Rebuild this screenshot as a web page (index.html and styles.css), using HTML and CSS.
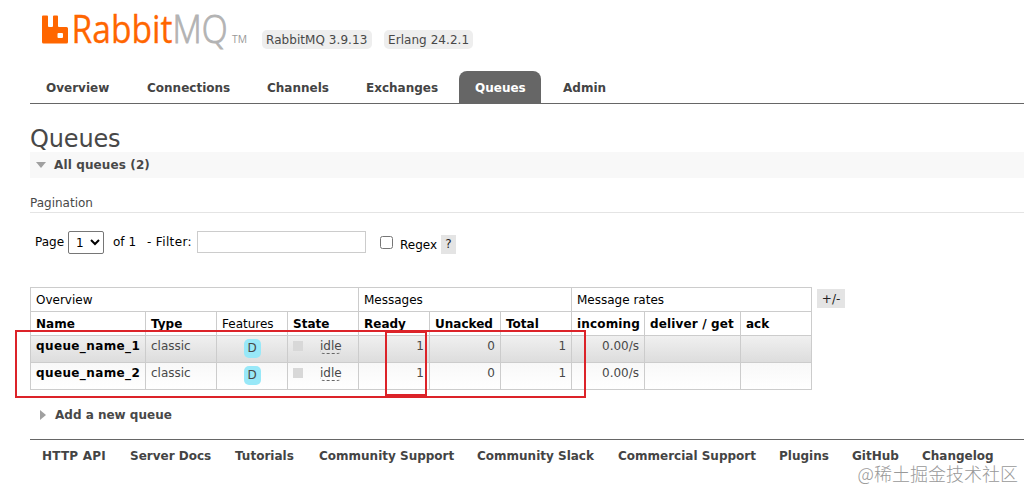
FILE: index.html
```html
<!DOCTYPE html>
<html lang="en">
<head>
  <meta charset="UTF-8" />
  <title>RabbitMQ Management</title>
  <link rel="stylesheet" href="styles.css">
</head>
<body>
  <header class="header">
    <svg class="logo" width="206" height="46" viewBox="0 0 206 46">
      <path class="logo-mark" fill-rule="evenodd" d="M2 6.500h4q1 0 1 1V17q0 1 1 1h3q1 0 1-1V7.500q0-1 1-1h3q1 0 1 1V17q0 1 1 1h7.500q1.500 0 1.500 1.500V33q0 1.500-1.500 1.500H2.500q-1.500 0-1.500-1.500V7.500q0-1 1-1zM17.500 24q-1 0-1 1v3q0 1 1 1h3.500q1 0 1-1v-3q0-1-1-1z" />
      <text class="logo-rabbit" x="30.500" y="34" textLength="101" lengthAdjust="spacingAndGlyphs">Rabbit</text>
      <text class="logo-mq" x="131.500" y="34" textLength="55" lengthAdjust="spacingAndGlyphs">MQ</text>
      <text class="logo-tm" x="191" y="34" textLength="15" lengthAdjust="spacingAndGlyphs">TM</text>
    </svg>
    <div class="versions">
      <span>RabbitMQ 3.9.13</span>
      <span>Erlang 24.2.1</span>
    </div>
  </header>

  <nav class="menu">
    <a class="w-overview">Overview</a>
    <a class="w-connections">Connections</a>
    <a class="w-channels">Channels</a>
    <a class="w-exchanges">Exchanges</a>
    <a class="w-queues selected">Queues</a>
    <a class="w-admin">Admin</a>
  </nav>

  <main class="main">
    <h1>Queues</h1>
    <h2 class="section open">All queues (2)</h2>
    <h3>Pagination</h3>

    <div class="filter">
      <label for="page">Page</label>
      <select id="page"><option>1</option></select>
      <span class="of">of 1</span>
      <label class="filter-label" for="filter">- Filter:</label>
      <input type="text" id="filter" />
      <input type="checkbox" id="regex" />
      <label class="regex-label" for="regex">Regex</label>
      <span class="help">?</span>
    </div>

    <div class="list-wrap">
      <div class="list">
        <table>
          <colgroup>
            <col class="c-name"><col class="c"><col class="c"><col class="c"><col class="c"><col class="c"><col class="c">
            <col class="c-in"><col class="c-get"><col class="c">
          </colgroup>
          <thead>
            <tr>
              <th class="plain" colspan="4">Overview</th>
              <th class="plain" colspan="3">Messages</th>
              <th class="plain" colspan="3">Message rates</th>
            </tr>
            <tr>
              <th>Name</th><th>Type</th><th class="plain">Features</th><th>State</th>
              <th>Ready</th><th>Unacked</th><th>Total</th>
              <th class="wide">incoming</th><th class="wide">deliver / get</th><th>ack</th>
            </tr>
          </thead>
          <tbody>
            <tr class="alt1">
              <td class="name">queue_name_1</td><td>classic</td>
              <td class="center"><span class="feature">D</span></td>
              <td><div class="state"><i></i><abbr>idle</abbr></div></td>
              <td class="r">1</td><td class="r">0</td><td class="r">1</td>
              <td class="r">0.00/s</td><td></td><td></td>
            </tr>
            <tr class="alt2">
              <td class="name">queue_name_2</td><td>classic</td>
              <td class="center"><span class="feature">D</span></td>
              <td><div class="state"><i></i><abbr>idle</abbr></div></td>
              <td class="r">1</td><td class="r">0</td><td class="r">1</td>
              <td class="r">0.00/s</td><td></td><td></td>
            </tr>
          </tbody>
        </table>
        <div class="mark mark-rows"></div>
        <div class="mark mark-ready"></div>
      </div>
      <span class="plus-minus">+/-</span>
    </div>

    <h2 class="section closed">Add a new queue</h2>
  </main>

  <footer class="footer">
    <a class="f-api">HTTP API</a>
    <a class="f-docs">Server Docs</a>
    <a class="f-tut">Tutorials</a>
    <a class="f-sup">Community Support</a>
    <a class="f-slack">Community Slack</a>
    <a class="f-com">Commercial Support</a>
    <a class="f-plug">Plugins</a>
    <a class="f-git">GitHub</a>
    <a class="f-log">Changelog</a>
  </footer>
  <div class="watermark">@稀土掘金技术社区</div>
</body>
</html>
```
FILE: styles.css
```css
* {
  box-sizing: border-box;
}

body {
  margin: 0;
  height: 489px;
  overflow: hidden;
  background: #fff;
  color: #484848;
  font: 12px/16px "DejaVu Sans", Verdana, sans-serif;
}

/* header */
.header {
  display: flex;
  align-items: flex-start;
  height: 71px;
  padding: 9px 0 0 41px;
}

.logo {
  overflow: visible;
}

.logo-mark,
.logo-rabbit {
  fill: #f60;
}

.logo-rabbit,
.logo-mq {
  font: 38px "Open Sans", sans-serif;
}

.logo-rabbit {
  stroke: #f60;
  stroke-width: 0.3;
}

.logo-mq {
  font-weight: 300;
  fill: #b3b3b3;
  stroke: #b3b3b3;
  stroke-width: 0.9;
}

.logo-tm {
  font: 10px "Open Sans", sans-serif;
  fill: #999;
}

.versions {
  display: flex;
  gap: 12px;
  padding: 21px 0 0 15px;
}

.versions span {
  height: 19px;
  padding: 2px 4px;
  border-radius: 5px;
  background: #eee;
  white-space: nowrap;
}

.versions span:first-child {
  width: 110px;
  letter-spacing: 0.06px;
}

.versions span:last-child {
  width: 89px;
  letter-spacing: 0.06px;
}

/* tabs */
.menu {
  display: flex;
  gap: 6px;
  height: 33px;
  margin-left: 30px;
  border-bottom: 1px solid #666;
}

.menu a {
  padding: 9px 0 0 16px;
  border-radius: 8px 8px 0 0;
  color: #444;
  font-weight: bold;
  white-space: nowrap;
}

.w-overview { width: 95px; }
.w-connections { width: 114px; }
.w-channels { width: 93px; }
.w-exchanges { width: 103px; }
.w-queues { width: 82px; }

.menu .selected {
  background: #666;
  color: #fff;
}

/* content */
.main {
  padding-left: 30px;
}

h1 {
  margin: 0;
  padding-top: 20px;
  height: 48px;
  font-size: 24px;
  line-height: 30px;
  font-weight: normal;
  letter-spacing: -0.15px;
}

.section {
  display: flex;
  align-items: center;
  margin: 0;
  font-size: 12px;
  font-weight: bold;
}

.section::before {
  content: "";
  border: solid transparent;
}

.open {
  height: 26px;
  padding-left: 6px;
  background: #f8f8f8;
  letter-spacing: 0.12px;
}

.open::before {
  margin-right: 8px;
  border-width: 6px 5.5px 0;
  border-top-color: #a0a0a0;
}

.closed {
  height: 22px;
  margin-top: 14px;
  padding-left: 10px;
}

.closed::before {
  margin-right: 9px;
  border-width: 5.5px 0 5.5px 6px;
  border-left-color: #a0a0a0;
}

h3 {
  height: 19px;
  margin: 16px 0 0;
  padding-top: 1px;
  border-bottom: 1px solid #e4e4e4;
  font-size: 12px;
  font-weight: normal;
}

.filter {
  display: flex;
  align-items: flex-start;
  height: 56px;
  margin-top: 18px;
  padding-left: 5px;
  color: #000;
  line-height: 22px;
  white-space: nowrap;
}

.filter label[for="page"] {
  width: 33px;
}

.filter select {
  width: 36px;
  height: 23px;
  padding: 0 0 0 3px;
  border: 1px solid #767676;
  border-radius: 2px;
  background: #fff;
  color: #000;
  font: inherit;
}

.of {
  width: 34px;
  margin-left: 9px;
}

.filter-label {
  width: 50px;
  letter-spacing: 0.35px;
}

.filter input[type="text"] {
  width: 169px;
  height: 22px;
  border: 1px solid #ccc;
}

.filter input[type="checkbox"] {
  width: 13px;
  height: 13px;
  margin: 5px 7px 0 14px;
}

.regex-label {
  width: 41px;
  padding-top: 3px;
}

.help,
.plus-minus {
  background: #e4e4e4;
  text-align: center;
  color: #222;
}

.help {
  width: 15px;
  height: 19px;
  margin-top: 4px;
  line-height: 19px;
}

.plus-minus {
  width: 28px;
  height: 19px;
  margin: 2px 0 0 5px;
  line-height: 20px;
}

/* queue list */
.list-wrap {
  display: flex;
}

.list {
  position: relative;
}

table {
  width: 782px;
  table-layout: fixed;
  border-collapse: collapse;
}

.c-name { width: 115px; }
.c { width: 71px; }
.c-in { width: 73px; }
.c-get { width: 96px; }

th,
td {
  padding: 0 5px;
  border: 1px solid #ccc;
  text-align: left;
  white-space: nowrap;
}

th {
  height: 24px;
  color: #000;
}

.plain {
  font-weight: normal;
}

.wide {
  letter-spacing: 0.15px;
}

td {
  height: 27px;
  padding-bottom: 6px;
}

.alt1 {
  background: linear-gradient(#f0f0f0, #dcdcdc);
}

.alt2 {
  background: linear-gradient(#f8f8f8, #fff);
}

.name {
  color: #000;
  font-weight: bold;
  letter-spacing: 0.38px;
}

.center {
  padding-bottom: 2px;
  text-align: center;
}

.feature {
  display: inline-block;
  width: 17px;
  height: 19px;
  border-radius: 5px;
  background: #98e8f8;
  line-height: 19px;
}

.state {
  display: flex;
  align-items: center;
  height: 16px;
}

.state i {
  width: 10px;
  height: 10px;
  margin-right: 17px;
  background: #d8d8d8;
}

.state abbr {
  width: 21px;
  height: 16px;
  border-bottom: 1px dashed #666;
  border-radius: 4px;
}

.r {
  text-align: right;
}

.mark {
  position: absolute;
  border: 2px solid #dc2329;
}

.mark-rows {
  left: -15px;
  top: 43px;
  width: 571px;
  height: 68px;
}

.mark-ready {
  left: 355px;
  top: 44px;
  width: 42px;
  height: 65px;
}

/* footer */
.footer {
  display: flex;
  height: 34px;
  margin: 13px 0 0 30px;
  padding: 8px 0 0 12px;
  border-top: 1px solid #666;
  color: #444;
  font-weight: bold;
  white-space: nowrap;
}

.f-api {
  width: 88px;
  letter-spacing: 0.2px;
}

.f-docs { width: 105px; }
.f-tut { width: 84px; }
.f-sup { width: 158px; }
.f-slack { width: 141px; }
.f-com { width: 161px; }
.f-plug { width: 73px; }
.f-git { width: 70px; }

.watermark {
  position: absolute;
  right: 6px;
  bottom: 5px;
  color: #999;
  font: 300 18px/22px "Noto Sans CJK SC", sans-serif;
}
```
